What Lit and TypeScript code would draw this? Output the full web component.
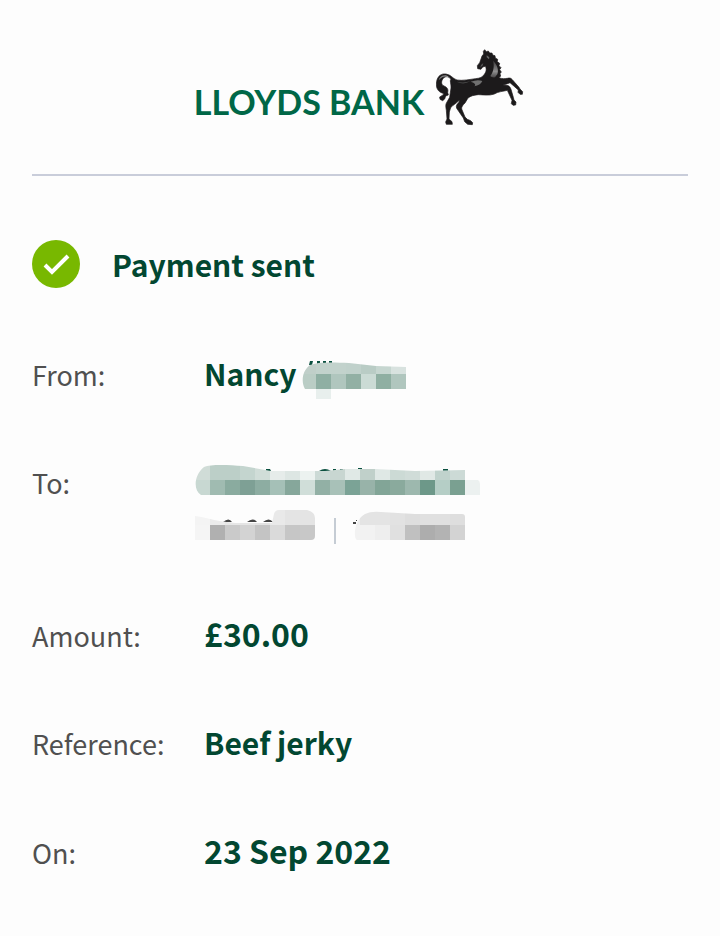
import { LitElement, html, svg, css, TemplateResult } from "lit";
import { customElement } from "lit/decorators.js";

const TILE = 15;

interface Mosaic {
  id: string;
  label: string;
  width: number;
  height: number;
  x: number;
  y: number;
  rows: string[][];
  outline: string;
  marks: string;
  ink: string;
}

const payerSurname: Mosaic = {
  id: "payer",
  label: "Hidden surname",
  width: 106,
  height: 40,
  x: 0,
  y: 0,
  rows: [
    ["#c0cfc9", "#c2d2cc", "#c2d2cc", "#c0d1cb", "#b9ccc5", "#c6d6d0", "#d8e2df"],
    ["#bacdc5", "#8fafa3", "#b0c6be", "#92b0a4", "#cbdbd5", "#8fafa2", "#b0c6be"],
    ["none", "#e8efed"],
  ],
  outline: "M4 30 C0 23 1 12 9 6 C16 3 30 3 48 4 L75 7 L105 8 V30 H30 V40 H15 V30Z",
  marks: "M9 2h3l-1 4h-3zM16 2h3v3h-3zM22 2h3v3h-3zM28 2h3v3h-3z",
  ink: "#0b5140",
};

const payeeName: Mosaic = {
  id: "payee",
  label: "Hidden payee name",
  width: 286,
  height: 34,
  x: 0,
  y: 3,
  rows: [
    ["#d0dcd7", "#bccfc8", "#bccfc8", "#c4d5cf", "#d0ddd8", "#e6ecea", "#dde6e3", "#ecf2f0", "#ccdad6", "#c8d6d1", "#e0e9e6", "#c0d0ca", "#dfe8e5", "#ccdad5", "#d0dcd8", "#e0e8e5", "#c0d2cc", "#ccdad6"],
    ["#c8d8d2", "#a0bbb1", "#8aab9f", "#7ea095", "#8dada2", "#a5c0b7", "#86a79b", "#d0ded9", "#92b0a5", "#a8c1b8", "#7ba396", "#98b3a9", "#82a597", "#8aaa9d", "#9db8ae", "#6d9889", "#b5cec6", "#7aa091", "#ecf1f0"],
  ],
  outline: "M6 33 C-2 28 -1 13 9 5 C16 2 34 3 48 4 L76 9 H130 L150 7 L180 7 L220 9 L270 8 V18 H283 Q285 19 285 22 V33Z",
  marks: "M71 7h4l1 2h-5zM124 9q6-4 12 0zM138 7h3v2h-3zM145 7h3v2h-3zM163 6h4v1h-4zM248 7h5v2h-5z",
  ink: "#0b5140",
};

const sortCode: Mosaic = {
  id: "sort",
  label: "Hidden sort code",
  width: 121,
  height: 30,
  x: 0,
  y: 0,
  rows: [
    ["#f4f4f4", "#ebebeb", "#e6e6e6", "#e5e5e5", "#e2e2e2", "#e9e9e9", "#e4e4e4", "#e4e4e4"],
    ["#f5f5f5", "#b0b0b0", "#cacaca", "#d3d3d3", "#c4c4c4", "#dadada", "#c6c6c6", "#c8c8c8"],
  ],
  outline: "M0 6 Q8 7 15 9 T40 13 H77 L79 4 Q80 0 84 0 H112 Q120 2 120 8 V26 Q120 30 116 30 H0Z",
  marks: "M28 12q6-5 9 0zM52 12q6-5 10 0zM68 12q6-5 10 0z",
  ink: "#444444",
};

const accountNumber: Mosaic = {
  id: "account",
  label: "Hidden account number",
  width: 121,
  height: 30,
  x: 0,
  y: 0,
  rows: [
    ["#efefef", "#e4e4e4", "#e4e4e4", "#e2e2e2", "#dedede", "#e0e0e0", "#e0e0e0", "#dedede"],
    ["#f2f2f2", "#f2f2f2", "#eeeeee", "#e0e0e0", "#c0c0c0", "#adadad", "#b3b3b3", "#d3d3d3"],
  ],
  outline: "M12 30 C8 28 9 10 20 4 Q26 1 36 2 L70 4 H117 Q120 4 120 7 V30Z",
  marks: "M8 12h3v2h-3zM11 10h1v1h-1z",
  ink: "#444444",
};

function mosaic(m: Mosaic): TemplateResult {
  return html`<svg
    class="mosaic"
    role="img"
    aria-label=${m.label}
    width=${m.width}
    height=${m.height}
    viewBox="0 0 ${m.width} ${m.height}"
  >
    <clipPath id=${m.id}><path d=${m.outline}></path></clipPath>
    <path d=${m.marks} fill=${m.ink}></path>
    <g clip-path="url(#${m.id})" shape-rendering="crispEdges">
      ${m.rows.map((row, r) =>
        row.map(
          (fill, c) => svg`<rect x=${m.x + c * TILE} y=${m.y + r * TILE} width=${TILE} height=${TILE} fill=${fill}></rect>`
        )
      )}
    </g>
  </svg>`;
}

const horse = html`<svg class="horse" viewBox="18 15 264 228" aria-hidden="true">
  <defs>
    <linearGradient id="neck" x1="0" y1="0" x2="0" y2="1">
      <stop offset="0" stop-color="#3a3839"></stop>
      <stop offset="0.65" stop-color="#8e8e8e"></stop>
      <stop offset="1" stop-color="#4a4849"></stop>
    </linearGradient>
    <linearGradient id="tail" x1="0" y1="0" x2="1" y2="1">
      <stop offset="0" stop-color="#444"></stop>
      <stop offset="0.5" stop-color="#aaa"></stop>
      <stop offset="1" stop-color="#222"></stop>
    </linearGradient>
  </defs>
  <g fill="#1c1a1b" stroke="#1c1a1b" stroke-width="2" stroke-linejoin="round">
    <path
      d="M164 17 L169 23 L175 21 L179 27 L186 27 L188 33 L195 35 L196 42 L203 46 L202 53 L209 58 L207 65 L213 71 L209 77 L214 84 L210 89 L212 96 L207 101
      C216 105 225 104 232 103 C239 101 243 102 247 107 L267 130 L270 135 L278 143 L277 151 L270 151 L264 145 L265 138 L240 116
      C232 120 224 121 217 123 L230 124 C237 125 241 129 243 136 L250 160 L252 168 L258 174 L257 183 L249 184 L244 179 L246 169 L232 139
      C220 142 204 143 193 150 C178 156 158 152 145 152 C131 153 122 156 114 162 L105 177 C99 183 94 188 95 195 L105 219 L112 226 L122 230 L128 236 L127 242 L113 241 L104 233 L100 222 L80 193
      C77 186 81 180 87 175 L88 169 C79 178 68 184 62 191 L58 204 L57 225 L66 233 L67 241 L49 241 L47 234 L51 225 L49 199 C47 188 46 181 51 174 L59 160 L63 132
      C64 119 58 111 63 105 C56 96 45 96 39 104 C33 112 33 122 42 126 C50 129 56 135 53 145 L55 153 L47 156 L44 165 L38 170 L30 166 L29 159 L36 155 L42 149
      L34 146 C20 140 17 125 20 112 C23 95 35 88 48 90 C63 92 68 104 81 108 C96 111 121 106 136 104 C150 103 158 99 162 92 C168 85 171 76 166 67
      L158 69 L153 76 L143 74 L142 65 L149 56 L153 45 L156 36 L161 30 L160 22Z"
    ></path>
  </g>
  <path d="M189 50 C202 62 207 78 202 91 L195 100 C188 101 183 98 181 96 C190 84 194 67 189 50Z" fill="url(#neck)"></path>
  <path d="M170 34 L178 40 L177 46 L170 40Z" fill="#666"></path>
  <path d="M26 109 C29 96 41 91 51 95 C57 98 60 102 60 105 C49 92 35 98 26 109Z" fill="url(#tail)"></path>
  <path d="M122 113 Q143 105 157 111 Q151 124 133 127 Q142 119 122 113Z" fill="#707070"></path>
  <path d="M80 113 Q100 118 121 112 Q100 124 80 113Z" fill="#494949"></path>
  <path d="M153 63 L160 57 L158 64 L151 71Z" fill="#555"></path>
</svg>`;

@customElement("app-root")
export class AppRoot extends LitElement {
  static styles = css`
    :host {
      display: block;
      min-height: 100vh;
      box-sizing: border-box;
      padding: 0 32px 32px;
      background: #fdfdfd;
      color: #024731;
      font-family: "Noto Sans CJK SC", "Noto Sans", sans-serif;
    }
    .brand {
      display: flex;
      justify-content: center;
      align-items: flex-end;
      gap: 12px;
      padding: 48px 2px 48px 0;
      border-bottom: 2px solid #c9cdda;
    }
    .wordmark {
      margin-bottom: 2px;
      color: #006747;
      font: 700 34px/44px Lato, sans-serif;
    }
    .horse {
      display: block;
      width: 88px;
      height: 78px;
    }
    .status {
      display: flex;
      align-items: center;
      gap: 32px;
      margin: 64px 0 63px;
    }
    .tick {
      width: 48px;
      height: 48px;
    }
    .title {
      margin: 0;
      font-size: 30px;
      font-weight: 700;
      line-height: 48px;
    }
    .details {
      display: grid;
      gap: 64px;
      margin: 0;
    }
    .row {
      display: grid;
      grid-template-columns: 163px 1fr;
      align-items: baseline;
    }
    .label {
      color: #505050;
      font-size: 27px;
      line-height: 40px;
    }
    .value {
      display: flex;
      margin: 0;
      padding-left: 9px;
      font-size: 30px;
      font-weight: 700;
      line-height: 44px;
    }
    .figures {
      font-size: 32px;
    }
    .name {
      height: 44px;
      gap: 4px;
    }
    .recipient .label {
      padding-top: 4px;
    }
    .payee {
      align-self: start;
      padding: 3px 0 0;
      flex-direction: column;
      gap: 14px;
      min-height: 85px;
    }
    .account {
      display: flex;
    }
    .divider {
      width: 2px;
      height: 26px;
      margin: 8px 9px 0 18px;
      background: #c5ccd4;
    }
    .mosaic {
      display: block;
      flex: none;
    }
    .name .mosaic {
      margin-top: 8px;
    }
  `;

  render() {
    return html`
      <header class="brand">
        <span class="wordmark">LLOYDS BANK</span>
        ${horse}
      </header>
      <main>
        <div class="status">
          <svg class="tick" viewBox="0 0 48 48" aria-hidden="true">
            <circle cx="24" cy="24" r="24" fill="#78b800"></circle>
            <path d="M13 25 L20 32 L36 16" fill="none" stroke="#fff" stroke-width="4"></path>
          </svg>
          <h1 class="title">Payment sent</h1>
        </div>
        <dl class="details">
          <div class="row">
            <dt class="label">From:</dt>
            <dd class="value name"><span>Nancy</span>${mosaic(payerSurname)}</dd>
          </div>
          <div class="row recipient">
            <dt class="label">To:</dt>
            <dd class="value payee">
              ${mosaic(payeeName)}
              <div class="account">
                ${mosaic(sortCode)}
                <span class="divider"></span>
                ${mosaic(accountNumber)}
              </div>
            </dd>
          </div>
          <div class="row">
            <dt class="label">Amount:</dt>
            <dd class="value figures">£30.00</dd>
          </div>
          <div class="row">
            <dt class="label">Reference:</dt>
            <dd class="value">Beef jerky</dd>
          </div>
          <div class="row">
            <dt class="label">On:</dt>
            <dd class="value figures">23 Sep 2022</dd>
          </div>
        </dl>
      </main>
    `;
  }
}
